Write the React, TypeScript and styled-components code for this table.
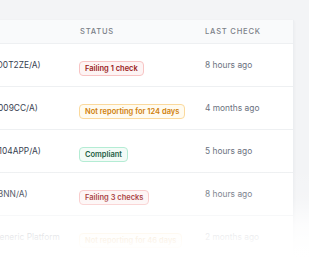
import styled, { createGlobalStyle } from "styled-components";

const GlobalStyle = createGlobalStyle`
  html, body {
    margin: 0;
    padding: 0;
    background: #f3f4f6;
    font-family: Inter, "Noto Sans", sans-serif;
    -webkit-font-smoothing: antialiased;
  }
`;

const Page = styled.div`
  position: relative;
  width: 309px;
  height: 258px;
  overflow: hidden;
  padding-top: 20px;
  box-sizing: border-box;
`;

const Card = styled.div`
  margin-left: -130px;
  width: 423px;
  background: #ffffff;
  border-right: 1px solid #eceef1;
  box-shadow: 0 1px 3px rgba(17, 24, 39, 0.05);
`;

const Row = styled.div<{ $head?: boolean }>`
  display: grid;
  grid-template-columns: 210px 125px 1fr;
  align-items: center;
  box-sizing: border-box;
  height: ${(p) => (p.$head ? "24px" : "43px")};
  background: ${(p) => (p.$head ? "#f9fafb" : "#ffffff")};
  border-bottom: 1px solid #eef0f2;
`;

const HeadCell = styled.div`
  font-size: 7.6px;
  font-weight: 500;
  letter-spacing: 0.1em;
  text-transform: uppercase;
  color: #7b8088;
`;

const Name = styled.div`
  padding-left: 52px;
  font-size: 8.4px;
  color: #374151;
  white-space: nowrap;
`;

const When = styled.div`
  font-size: 8.4px;
  color: #6b7280;
  white-space: nowrap;
`;

const tones = {
  red: { fg: "#9b1c1c", border: "#f8c4c4", bg: "#fdf4f4" },
  amber: { fg: "#d0800a", border: "#fbd99c", bg: "#fffbf0" },
  green: { fg: "#1f5f45", border: "#b4ecd4", bg: "#f3fbf7" },
};

type Tone = keyof typeof tones;

const Badge = styled.span<{ $tone: Tone }>`
  display: inline-flex;
  align-items: center;
  height: 13px;
  padding: 0 5px;
  margin-left: -1px;
  border-radius: 4px;
  border: 1px solid ${(p) => tones[p.$tone].border};
  background: ${(p) => tones[p.$tone].bg};
  color: ${(p) => tones[p.$tone].fg};
  font-size: 7.5px;
  font-weight: 600;
  white-space: nowrap;
`;

const Fade = styled.div`
  position: absolute;
  left: 0;
  right: 0;
  top: 165px;
  bottom: 0;
  background: linear-gradient(
    to bottom,
    rgba(255, 255, 255, 0) 0%,
    rgba(255, 255, 255, 0.15) 35%,
    rgba(255, 255, 255, 0.78) 65%,
    rgba(255, 255, 255, 0.95) 85%,
    #ffffff 100%
  );
  pointer-events: none;
`;

const devices: { name: string; status: string; tone: Tone; when: string }[] = [
  { name: "MacBook Pro (C02D0T2ZE/A)", status: "Failing 1 check", tone: "red", when: "8 hours ago" },
  { name: "MacBook Air (MGN009CC/A)", status: "Not reporting for 124 days", tone: "amber", when: "4 months ago" },
  { name: "MacBook Pro (MK2104APP/A)", status: "Compliant", tone: "green", when: "5 hours ago" },
  { name: "iMac Retina (MHK03NN/A)", status: "Failing 3 checks", tone: "red", when: "8 hours ago" },
  { name: "HP EliteBook 840 Generic Platform", status: "Not reporting for 46 days", tone: "amber", when: "2 months ago" },
];

export default function App() {
  return (
    <>
      <GlobalStyle />
      <Page>
        <Card>
          <Row $head>
            <HeadCell />
            <HeadCell>Status</HeadCell>
            <HeadCell>Last check</HeadCell>
          </Row>
          {devices.map((d) => (
            <Row key={d.name}>
              <Name>{d.name}</Name>
              <div>
                <Badge $tone={d.tone}>{d.status}</Badge>
              </div>
              <When>{d.when}</When>
            </Row>
          ))}
        </Card>
        <Fade />
      </Page>
    </>
  );
}
